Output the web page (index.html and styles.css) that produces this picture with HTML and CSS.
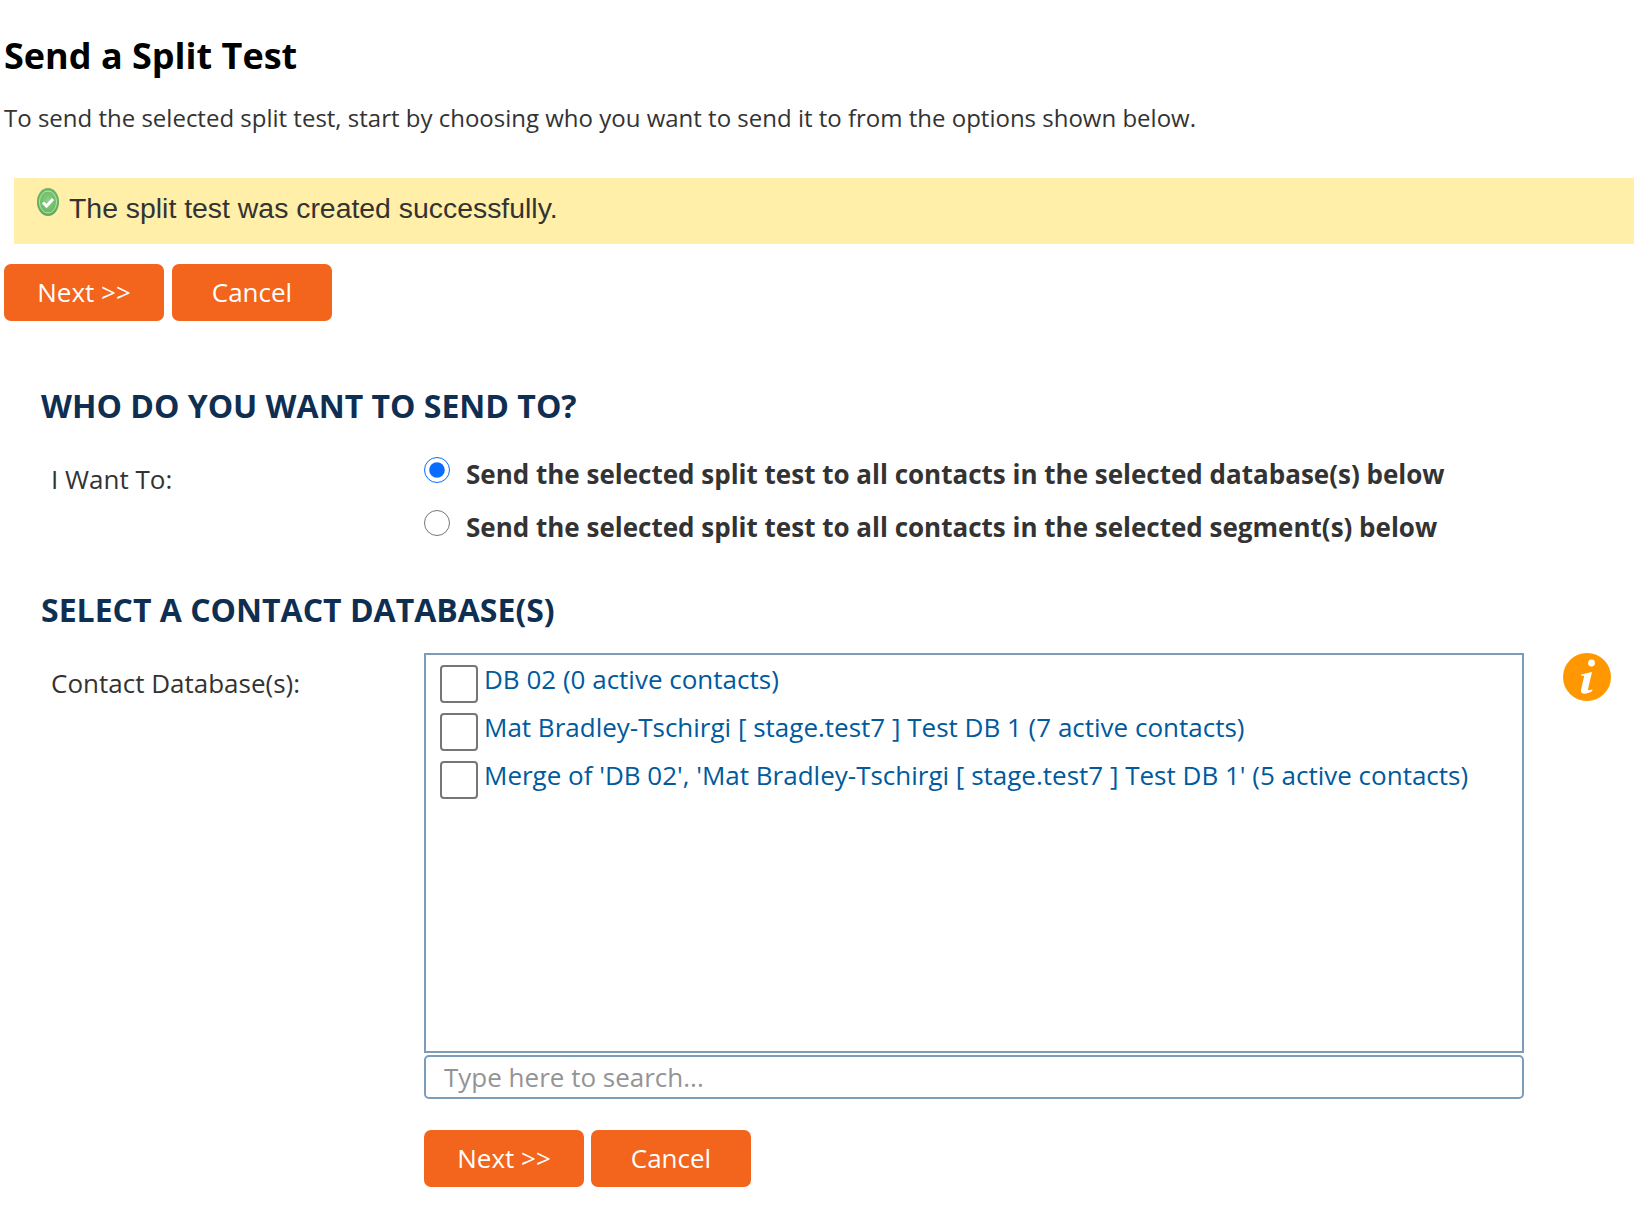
FILE: index.html
```html
<!DOCTYPE html>
<html lang="en">
<head>
    <meta charset="UTF-8">
    <meta name="viewport" content="width=device-width, initial-scale=1.0">
    <title>Send a Split Test</title>
    <link rel="stylesheet" href="styles.css">
</head>
<body>
    <div class="page">
        <h1 class="title">Send a Split Test</h1>
        <p class="intro">To send the selected split test, start by choosing who you want to send it to from the options shown below.</p>

        <div class="notice">
            <svg class="notice-icon" width="24" height="30" viewBox="0 0 24 30">
                <defs>
                    <radialGradient id="tick-bg" cx="50%" cy="45%" r="55%">
                        <stop offset="0" stop-color="#8fcf85"/>
                        <stop offset="0.75" stop-color="#6ab863"/>
                        <stop offset="1" stop-color="#5aa65a"/>
                    </radialGradient>
                </defs>
                <ellipse cx="12" cy="15" rx="11" ry="14" fill="url(#tick-bg)"/>
                <ellipse cx="12" cy="15" rx="8.500" ry="11" fill="none" stroke="#b9e2b0" stroke-width="1"/>
                <path d="M7 15.500l3.500 3.500 6.500-7" fill="none" stroke="#fff" stroke-width="3"/>
            </svg>
            <span class="notice-text">The split test was created successfully.</span>
        </div>

        <div class="actions">
            <button class="btn">Next &gt;&gt;</button>
            <button class="btn">Cancel</button>
        </div>

        <h2 class="section-title first">Who do you want to send to?</h2>
        <div class="row">
            <div class="row-label radio-label">I Want To:</div>
            <div class="radio-list">
                <label class="radio-item">
                    <input type="radio" name="send" checked>
                    <span>Send the selected split test to all contacts in the selected database(s) below</span>
                </label>
                <label class="radio-item">
                    <input type="radio" name="send">
                    <span>Send the selected split test to all contacts in the selected segment(s) below</span>
                </label>
            </div>
        </div>

        <h2 class="section-title second">Select a Contact Database(s)</h2>
        <div class="row db-row">
            <div class="row-label db-label">Contact Database(s):</div>
            <div class="picker">
                <div class="db-list">
                    <label class="db-item"><span class="box"></span><span>DB 02 (0 active contacts)</span></label>
                    <label class="db-item"><span class="box"></span><span>Mat Bradley-Tschirgi [ stage.test7 ] Test DB 1 (7 active contacts)</span></label>
                    <label class="db-item"><span class="box"></span><span>Merge of 'DB 02', 'Mat Bradley-Tschirgi [ stage.test7 ] Test DB 1' (5 active contacts)</span></label>
                </div>
                <input class="search" type="text" placeholder="Type here to search...">
                <div class="actions bottom">
                    <button class="btn">Next &gt;&gt;</button>
                    <button class="btn">Cancel</button>
                </div>
            </div>
            <svg class="info" width="48" height="48" viewBox="0 0 48 48">
                <circle cx="24" cy="24" r="24" fill="#ff9800"/>
                <circle cx="28.500" cy="10" r="3.400" fill="#fff"/>
                <path d="M18 21.500l11-2.500-4 17c-.3 1.500 1 1.500 4.500 .2l-.5 2c-5 3.300-12 3.800-11-1.200l3.200-14-3.200-.5z" fill="#fff"/>
            </svg>
        </div>
    </div>
</body>
</html>
```

FILE: styles.css
```css
* {
    box-sizing: border-box;
}

body {
    margin: 0;
    background: #fff;
    font-family: "Open Sans", sans-serif;
    color: #333;
    overflow-x: hidden;
}

.page {
    height: 1212px;
    padding-left: 4px;
}

.title {
    margin: 0;
    padding-top: 33px;
    font-size: 36px;
    line-height: 46px;
    font-weight: 700;
    color: #000;
}

.intro {
    margin: 22px 0 0;
    font-size: 24px;
    line-height: 34px;
}

.notice {
    display: flex;
    margin: 43px 0 0 10px;
    height: 66px;
    padding: 9px 0 0 22px;
    background: #ffefa8;
    font-family: "Liberation Sans", sans-serif;
    font-size: 28.4px;
    line-height: 40px;
}

.notice-icon {
    margin-right: 9px;
}

.notice-text {
    padding-top: 1px;
}

.actions {
    display: flex;
    gap: 8px;
    margin-top: 20px;
}

.btn {
    width: 160px;
    height: 57px;
    padding: 0 0 2px;
    border: none;
    border-radius: 7px;
    background: #f3641c;
    color: #fff;
    font-family: "Open Sans", sans-serif;
    font-size: 26px;
}

.section-title {
    margin: 0 0 0 37px;
    font-size: 32px;
    line-height: 44px;
    font-weight: 700;
    text-transform: uppercase;
    color: #0f2f52;
}

.section-title.first {
    margin-top: 63px;
}

.section-title.second {
    margin-top: 44px;
}

.row {
    display: flex;
    margin-top: 29px;
}

.row-label {
    width: 420px;
    padding-left: 47px;
    font-size: 26px;
    line-height: 36px;
}

.radio-label {
    padding-top: 4px;
}

.radio-list {
    display: flex;
    flex-direction: column;
    gap: 19px;
}

.radio-item {
    display: flex;
    align-items: flex-start;
    gap: 16px;
    font-size: 26px;
    line-height: 34px;
    font-weight: 700;
}

.radio-item input {
    width: 26px;
    height: 26px;
    margin: 0;
    accent-color: #0a6cff;
}

.db-row {
    margin-top: 21px;
}

.db-label {
    padding-top: 12px;
}

.picker {
    width: 1100px;
}

.db-list {
    height: 400px;
    padding: 3px 14px;
    border: 2px solid #7d9cb9;
}

.db-item {
    display: flex;
    gap: 6px;
    height: 48px;
    font-size: 26px;
    line-height: 42px;
    color: #005a9e;
}

.box {
    width: 38px;
    height: 38px;
    margin-top: 7px;
    border: 2px solid #767676;
    border-radius: 4px;
    background: #fff;
}

.search {
    display: block;
    width: 100%;
    height: 44px;
    margin-top: 2px;
    padding: 0 18px;
    border: 2px solid #7d9cb9;
    border-radius: 5px;
    font-family: "Open Sans", sans-serif;
    font-size: 26px;
}

.search::placeholder {
    color: #949494;
}

.actions.bottom {
    gap: 7px;
    margin-top: 31px;
}

.info {
    margin-left: 39px;
}
```
